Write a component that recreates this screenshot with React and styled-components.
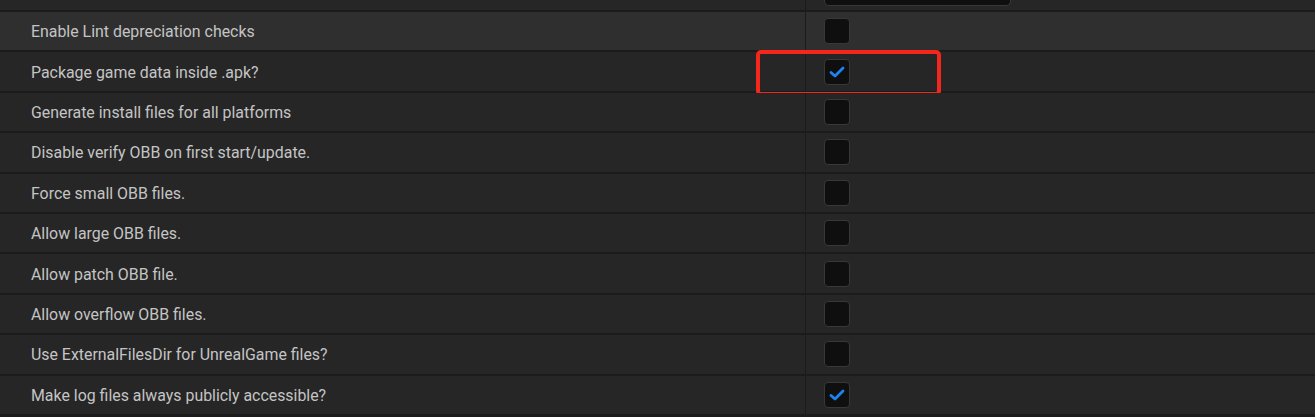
import React from 'react';
import styled, { createGlobalStyle } from 'styled-components';

const GlobalStyle = createGlobalStyle`
    html, body {
        margin: 0;
        padding: 0;
        background: #1b1b1b;
        overflow: hidden;
    }
    body {
        font-family: Roboto, "Noto Sans", sans-serif;
    }
`;

const Panel = styled.div`
    width: 1315px;
    height: 417px;
    display: flex;
    flex-direction: column;
    background: #1b1b1b;
`;

const Row = styled.div`
    position: relative;
    display: grid;
    grid-template-columns: 805px 1px 1fr;
    flex: 0 0 auto;
    height: ${({ partial }) => (partial ? '10px' : '38.4px')};
    margin-bottom: 2px;
    background: ${({ hovered }) => (hovered ? '#2f2f2f' : '#262626')};
`;

const Label = styled.div`
    display: flex;
    align-items: center;
    padding-left: 31px;
    padding-top: 1px;
    font-size: 15.9px;
    color: #c4c4c4;
    white-space: nowrap;
`;

const Divider = styled.div`
    background: #1b1b1b;
`;

const ValueCell = styled.div`
    display: flex;
    align-items: ${({ partial }) => (partial ? 'flex-start' : 'center')};
    padding-left: 18px;
`;

const Checkbox = styled.div`
    box-sizing: border-box;
    width: 26px;
    height: 26px;
    border-radius: 4px;
    border: 1px solid #383838;
    background: #0f0f0f;
    display: flex;
    align-items: center;
    justify-content: center;
`;

const TextBox = styled.div`
    width: 185px;
    height: 6px;
    margin-top: -1px;
    background: #0f0f0f;
    border: 1px solid #383838;
    border-top: none;
    border-radius: 0 0 5px 5px;
`;

const Highlight = styled.div`
    position: absolute;
    left: 756px;
    top: -2px;
    width: 185px;
    height: 46px;
    box-sizing: border-box;
    border: 4px solid #f5261c;
    border-radius: 5px;
    pointer-events: none;
`;

const Check = () => (
    <svg width="20" height="20" viewBox="0 0 20 20">
        <path
            d="M4 10.5 L8 14 L16 6"
            fill="none"
            stroke="#1b84f2"
            strokeWidth="2.8"
            strokeLinecap="round"
            strokeLinejoin="round"
        />
    </svg>
);

const settings = [
    { label: 'Enable Lint depreciation checks', checked: false, hovered: true },
    { label: 'Package game data inside .apk?', checked: true, marked: true },
    { label: 'Generate install files for all platforms', checked: false },
    { label: 'Disable verify OBB on first start/update.', checked: false },
    { label: 'Force small OBB files.', checked: false },
    { label: 'Allow large OBB files.', checked: false },
    { label: 'Allow patch OBB file.', checked: false },
    { label: 'Allow overflow OBB files.', checked: false },
    { label: 'Use ExternalFilesDir for UnrealGame files?', checked: false },
    { label: 'Make log files always publicly accessible?', checked: true },
];

const App = () => (
    <>
        <GlobalStyle />
        <Panel>
            <Row partial>
                <Label />
                <Divider />
                <ValueCell partial>
                    <TextBox />
                </ValueCell>
            </Row>
            {settings.map(({ label, checked, hovered, marked }) => (
                <Row key={label} hovered={hovered}>
                    <Label>{label}</Label>
                    <Divider />
                    <ValueCell>
                        <Checkbox>{checked && <Check />}</Checkbox>
                    </ValueCell>
                    {marked && <Highlight />}
                </Row>
            ))}
        </Panel>
    </>
);

export default App;
